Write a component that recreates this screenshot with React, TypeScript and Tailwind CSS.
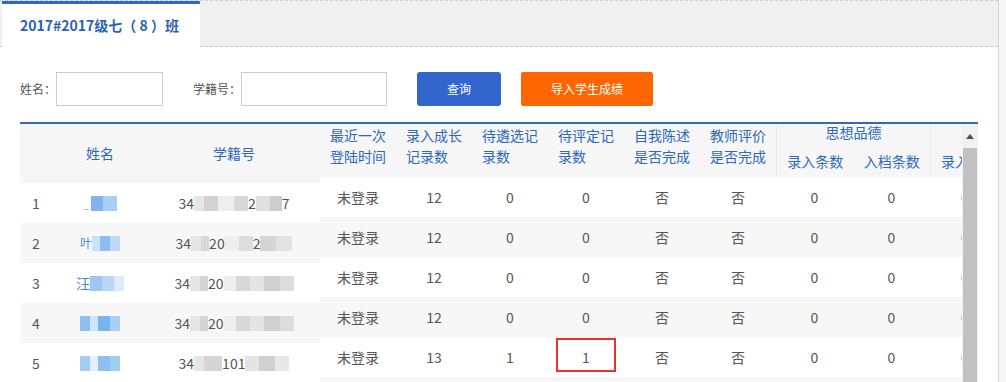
import React from "react";

const F = "font-['Noto_Sans_CJK_SC','Noto_Sans',sans-serif]";

type Row = { idx: number; name: React.ReactNode; id: React.ReactNode; cols: string[]; };

const Blk = ({ w, c }: { w: number; c: string }) => (
  <span className="inline-block h-[15px] align-middle" style={{ width: w, background: c }} />
);

const names: React.ReactNode[] = [
  <span className="flex items-center"><span className="text-[#6b9fd9] text-[10px] mr-[2px]">_</span><Blk w={12} c="#7fb4ec" /><Blk w={14} c="#a9cff3" /></span>,
  <span className="flex items-center"><span className="text-[#4a86d0] text-[12px]">叶</span><Blk w={8} c="#c9e2f8" /><Blk w={10} c="#8dbdf0" /><Blk w={10} c="#bcdaf6" /></span>,
  <span className="flex items-center"><span className="text-[#4a86d0] text-[14px]">汪</span><Blk w={12} c="#9cc7f2" /><Blk w={12} c="#b7d7f5" /><Blk w={10} c="#dcecfa" /></span>,
  <span className="flex items-center"><Blk w={10} c="#8fbff0" /><Blk w={8} c="#cfe5f9" /><Blk w={12} c="#7ab4ee" /><Blk w={10} c="#a6d0f5" /></span>,
  <span className="flex items-center"><Blk w={10} c="#a4cdf4" /><Blk w={8} c="#e3f0fb" /><Blk w={12} c="#8cc0f0" /><Blk w={10} c="#9ecff2" /></span>,
];

const ids: React.ReactNode[] = [
  <span className="flex items-center">34<Blk w={10} c="#e6e6e6" /><Blk w={14} c="#d2d2d2" /><Blk w={16} c="#eeeeee" /><Blk w={14} c="#d8d8d8" />2<Blk w={14} c="#e0e0e0" /><Blk w={12} c="#cccccc" />7</span>,
  <span className="flex items-center">34<Blk w={10} c="#e6e6e6" /><Blk w={8} c="#d8d8d8" />20<Blk w={14} c="#eeeeee" /><Blk w={14} c="#dddddd" />2<Blk w={16} c="#d5d5d5" /><Blk w={16} c="#e3e3e3" /></span>,
  <span className="flex items-center">34<Blk w={10} c="#e6e6e6" /><Blk w={8} c="#d5d5d5" />20<Blk w={12} c="#eeeeee" /><Blk w={14} c="#d8d8d8" /><Blk w={14} c="#e4e4e4" /><Blk w={16} c="#d0d0d0" /><Blk w={14} c="#dcdcdc" /></span>,
  <span className="flex items-center">34<Blk w={10} c="#e6e6e6" /><Blk w={8} c="#d5d5d5" />20<Blk w={12} c="#eeeeee" /><Blk w={14} c="#d8d8d8" /><Blk w={14} c="#e4e4e4" /><Blk w={16} c="#d0d0d0" /><Blk w={14} c="#dcdcdc" /></span>,
  <span className="flex items-center">34<Blk w={10} c="#e6e6e6" /><Blk w={18} c="#d5d5d5" />101<Blk w={14} c="#e4e4e4" /><Blk w={16} c="#d0d0d0" /><Blk w={14} c="#e8e8e8" /></span>,
];

const rows: Row[] = [
  { idx: 1, name: names[0], id: ids[0], cols: ["未登录", "12", "0", "0", "否", "否", "0", "0", "0"] },
  { idx: 2, name: names[1], id: ids[1], cols: ["未登录", "12", "0", "0", "否", "否", "0", "0", "0"] },
  { idx: 3, name: names[2], id: ids[2], cols: ["未登录", "12", "0", "0", "否", "否", "0", "0", "0"] },
  { idx: 4, name: names[3], id: ids[3], cols: ["未登录", "12", "0", "0", "否", "否", "0", "0", "0"] },
  { idx: 5, name: names[4], id: ids[4], cols: ["未登录", "13", "1", "1", "否", "否", "0", "0", "0"] },
  { idx: 6, name: "", id: "", cols: ["", "", "", "", "", "", "", "", ""] },
];

const colW = [76, 76, 76, 76, 76, 76, 77, 77, 77];

const H = "text-[#2d68ba] text-[14px]";

export default function App() {
  return (
    <div className={`w-[1006px] h-[382px] overflow-hidden flex bg-white ${F}`}>
      <div className="w-[999px] shrink-0 border-r border-[#d6d6d6] flex flex-col">
        {/* tab bar */}
        <div className="h-[47px] shrink-0 bg-[#f0f0f0] border-t border-[#cfcfcf] border-b border-dashed border-b-[#c8c8c8] flex pl-[2px]">
          <div className="w-[198px] h-[46px] -mb-px bg-white border-t-[3px] border-[#3366cc] flex items-center pl-[18px] pb-[1px]">
            <span className="text-[#2c62b0] text-[14px] font-bold whitespace-pre">2017#2017级七（ 8 ）班</span>
          </div>
        </div>

        {/* search row */}
        <div className="flex items-center mt-[25px] h-[34px] text-[12px] text-[#555]">
          <span className="ml-[20px] w-[36px]">姓名：</span>
          <div className="w-[107px] h-[34px] border border-[#cccccc] bg-white" />
          <span className="ml-[30px] w-[48px]">学籍号：</span>
          <div className="w-[146px] h-[34px] border border-[#cccccc] bg-white" />
          <div className="ml-[30px] w-[84px] h-[34px] rounded-[3px] bg-[#3366cc] text-white flex items-center justify-center">查询</div>
          <div className="ml-[20px] w-[132px] h-[34px] rounded-[2px] bg-[#ff6600] text-white flex items-center justify-center">导入学生成绩</div>
        </div>

        {/* table */}
        <div className="ml-[20px] mt-[16px] w-[958px] border-t-2 border-[#3a68b0] flex">
          {/* frozen left */}
          <div className="w-[300px] shrink-0">
            <div className={`h-[59px] bg-[#f6f6f6] flex items-center ${H}`}>
              <div className="w-[32px]" />
              <div className="w-[96px] text-center">姓名</div>
              <div className="w-[172px] text-center">学籍号</div>
            </div>
            {rows.map((r, i) => (
              <div key={i} className={`h-[40px] flex items-center text-[14px] text-[#555] ${i % 2 === 1 ? "bg-[#f7f7f7]" : "bg-white"}`}>
                <div className="w-[32px] pl-[12px]">{r.idx <= 5 ? r.idx : ""}</div>
                <div className="w-[96px] flex justify-center">{r.name}</div>
                <div className="w-[172px] flex justify-center">{r.id}</div>
              </div>
            ))}
          </div>

          {/* scrolling right */}
          <div className="w-[642px] shrink-0 overflow-hidden">
            <div className="w-[687px]">
              <div className={`h-[53px] bg-[#f6f6f6] flex ${H}`}>
                {[["最近一次", "登陆时间"], ["录入成长", "记录数"], ["待遴选记", "录数"], ["待评定记", "录数"], ["自我陈述", "是否完成"], ["教师评价", "是否完成"]].map((t, i) => (
                  <div key={i} className="w-[76px] flex justify-center">
                    <div className="w-[56px] leading-[21px] pt-[1px]">
                      {t[0]}<br />{t[1]}
                    </div>
                  </div>
                ))}
                <div className="w-[154px] flex flex-col border-l border-[#ececec]">
                  <div className="h-[22px] text-center leading-[16px]">思想品德</div>
                  <div className="flex-1 flex items-center">
                    <div className="w-[77px] text-center">录入条数</div>
                    <div className="w-[77px] text-center">入档条数</div>
                  </div>
                </div>
                <div className="w-[77px] flex flex-col border-l border-[#ececec]">
                  <div className="h-[22px]" />
                  <div className="flex-1 flex items-center pl-[10px] whitespace-nowrap">录入条数</div>
                </div>
              </div>
              {rows.map((r, i) => (
                <div key={i} className={`h-[40px] flex items-center text-[14px] text-[#555] ${i % 2 === 1 ? "bg-[#f7f7f7]" : "bg-white"}`}>
                  {r.cols.map((c, j) => (
                    <div
                      key={j}
                      className={`relative h-full flex items-center ${j === 8 ? "justify-start pl-[31px]" : "justify-center"}`}
                      style={{ width: colW[j] }}
                    >
                      {c}
                      {i === 4 && j === 3 && (
                        <div className="absolute left-[8px] right-[8px] top-[1px] bottom-[5px] border-2 border-[#e8302f]" />
                      )}
                    </div>
                  ))}
                </div>
              ))}
            </div>
          </div>

          {/* scrollbar */}
          <div className="w-[16px] shrink-0 bg-[#f1f1f1] flex flex-col">
            <div className="h-[24px] flex items-center justify-center">
              <svg width="8" height="5" viewBox="0 0 8 5"><path d="M0 5 L4 0 L8 5 Z" fill="#505050" /></svg>
            </div>
            <div className="h-[300px] mx-[1px] bg-[#c1c1c1]" />
          </div>
        </div>
      </div>
      <div className="flex-1 bg-[#f7f7f7]" />
    </div>
  );
}
